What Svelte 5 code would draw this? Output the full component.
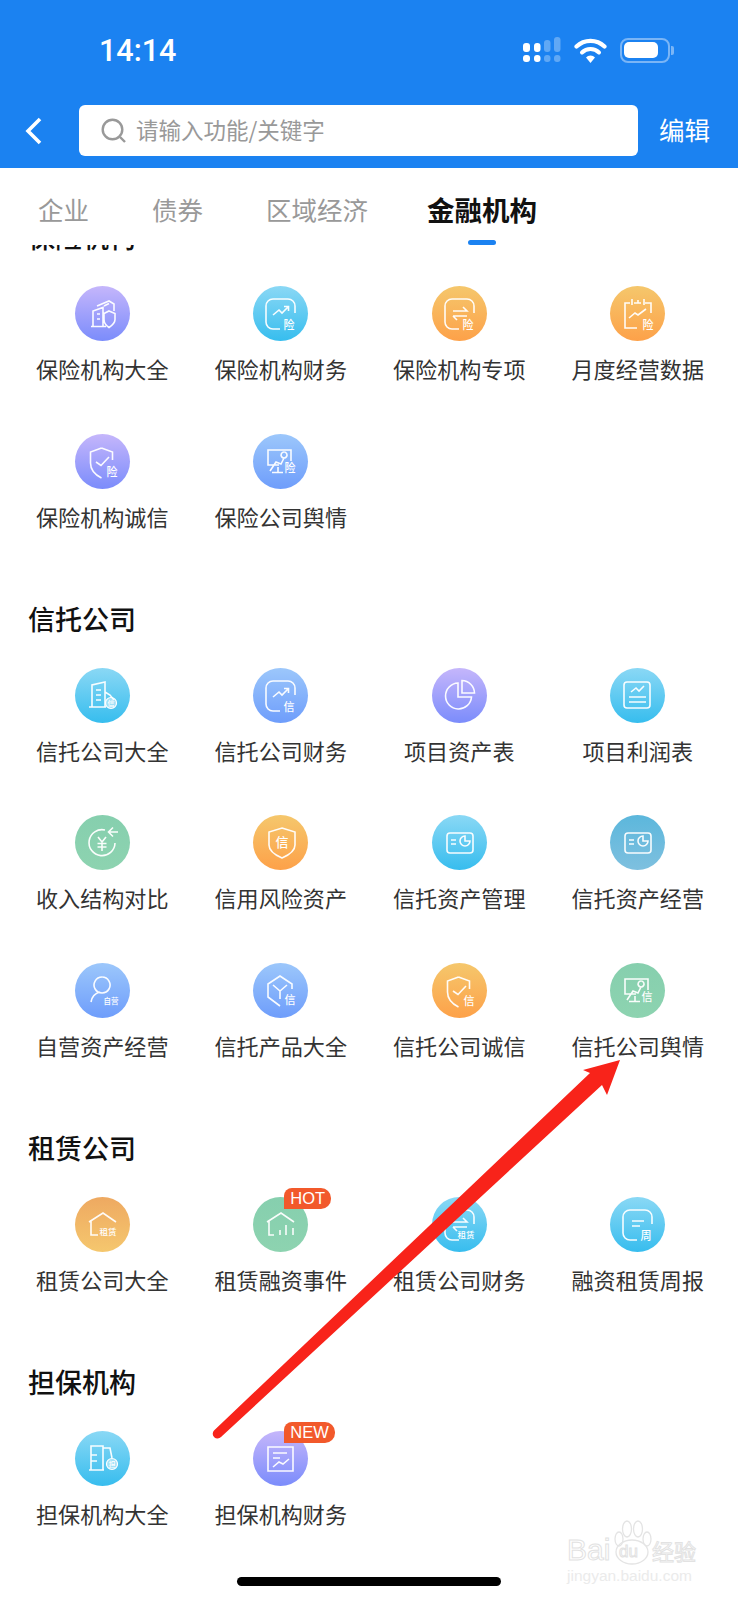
<script>
	// icon strokes live in a 55x55 box, tag is the tiny char inside the circle
	const shell = 'M27 43H20a7 7 0 0 1-7-7V20a7 7 0 0 1 7-7H35a7 7 0 0 1 7 7V27';
	const trend = 'M20 29l6-5 3 3 6-6M31 20.5h4.5V25';
	const arrows = 'M21 25H35l-4-4M21 30H35M21 30l4 4';
	const monitor = 'M26 31H15V16H38V27M17 37l6-9 5 2 3-6M19 38.5H30M25 33V38.500M31 18a3 3 0 1 0 .1 0';
	const check = 'M26.500 14l-11 4v11c0 7 5 12 11 15M26.500 14l11 4v8M21 28l5 3.500 8-8.500';

	const icons = {
		insure: { d: 'M16 40.500H31M18 40V25l10-3.500V40M22 28h3M22 33h3M22 20l12-5 5 3V25M29 20l5-2.500M34 25l6 2.500v6c0 4-3 6-6 8-3-2-5-4-5-8v-6z' },
		fin: { d: shell + trend, t: '险' },
		fin2: { d: shell + trend, t: '信' },
		swap: { d: shell + arrows, t: '险' },
		month: { d: 'M27 42H15V17H20M24 17h7M35 17h6V27M22 13v6M28 14v3M34 13v6M19 32l6-5 3 2 8-6', t: '险', tx: 38 },
		shield: { d: check, t: '险', tx: 37, ty: 42 },
		shield2: { d: check, t: '信', tx: 37, ty: 42 },
		monitor: { d: monitor, t: '险', tx: 37, ty: 38 },
		monitor2: { d: monitor, t: '信', tx: 37, ty: 38 },
		tower: {
			d: 'M14 39H31M17 39V17l13-3V39M21 22h5M21 27h5M21 32h5M30 24l5 3 4 5',
			dot: [36, 35, 5.500],
			t: '信',
			tx: 36,
			ty: 38,
			ts: 7
		},
		pie: { d: 'M26 15a13 13 0 1 0 13.500 14H26zM30 12.500a13 13 0 0 1 12.500 12.500H30z' },
		report: { d: 'M17 14H37a3 3 0 0 1 3 3V37a3 3 0 0 1-3 3H17a3 3 0 0 1-3-3V17a3 3 0 0 1 3-3zM21 24l5-4 3 3 5-5M19 29H36M19 34H36' },
		yuan: {
			d: 'M30 15a13 13 0 1 0 10 13M34 17H43M38 12.500l-4.500 4.500 4.500 4.500M23 22l4 5 4-5M27 27V36M22.500 28.500h9M22.500 32h9'
		},
		badge: { d: 'M29 13l13 4v13c0 6-6 10-13 13-7-3-13-7-13-13V17z', t: '信', tx: 29, ty: 32, ts: 13 },
		card: { d: 'M18 18H38a3 3 0 0 1 3 3V35a3 3 0 0 1-3 3H18a3 3 0 0 1-3-3V21a3 3 0 0 1 3-3zM19 25h5M19 29h5M33 21a5 5 0 1 0 5 5H33z' },
		person: { d: 'M27 14a8 8 0 1 0 .100 0M16 39c1-6 5-9 9-10', t: '自营', tx: 36, ty: 41, ts: 7.500 },
		cube: { d: 'M27 43L15 34V21L27 13 39 21V26M20 22l7 6 7-6M27 28V36', t: '信', tx: 37, ty: 41 },
		house: { d: 'M14 25L28 16 41 25M16 23V38H23', t: '租赁', tx: 33, ty: 38, ts: 8.500 },
		bars: { d: 'M14 25L28 16 41 25M16 23V38H21M27 33V38M33 28V38M40 31V38' },
		leasefin: { d: shell + arrows, t: '租赁', tx: 34, ty: 41, ts: 8.500 },
		week: { d: shell + 'M22 24H34M22 29H30', t: '周' },
		guard: {
			d: 'M14 39H29M16 39V15H28V39M16 24H22M16 30H22M28 17H35l2 10',
			dot: [37, 33, 5.500],
			t: '担',
			tx: 37,
			ty: 36,
			ts: 7
		},
		paper: { d: 'M15 16H40V40H15zM20 22H34M20 27H27M20 36l6-5 4 2 6-5' }
	};

	const sections = [
		{
			title: '保险机构',
			items: [
				{ label: '保险机构大全', icon: 'insure', tone: 'purple' },
				{ label: '保险机构财务', icon: 'fin', tone: 'cyan' },
				{ label: '保险机构专项', icon: 'swap', tone: 'orange' },
				{ label: '月度经营数据', icon: 'month', tone: 'orange' },
				{ label: '保险机构诚信', icon: 'shield', tone: 'purple' },
				{ label: '保险公司舆情', icon: 'monitor', tone: 'blue' }
			]
		},
		{
			title: '信托公司',
			items: [
				{ label: '信托公司大全', icon: 'tower', tone: 'cyan' },
				{ label: '信托公司财务', icon: 'fin2', tone: 'blue' },
				{ label: '项目资产表', icon: 'pie', tone: 'purple' },
				{ label: '项目利润表', icon: 'report', tone: 'cyan' },
				{ label: '收入结构对比', icon: 'yuan', tone: 'green' },
				{ label: '信用风险资产', icon: 'badge', tone: 'orange' },
				{ label: '信托资产管理', icon: 'card', tone: 'cyan' },
				{ label: '信托资产经营', icon: 'card', tone: 'teal' },
				{ label: '自营资产经营', icon: 'person', tone: 'blue' },
				{ label: '信托产品大全', icon: 'cube', tone: 'blue' },
				{ label: '信托公司诚信', icon: 'shield2', tone: 'orange' },
				{ label: '信托公司舆情', icon: 'monitor2', tone: 'green' }
			]
		},
		{
			title: '租赁公司',
			items: [
				{ label: '租赁公司大全', icon: 'house', tone: 'sand' },
				{ label: '租赁融资事件', icon: 'bars', tone: 'green', flag: 'HOT' },
				{ label: '租赁公司财务', icon: 'leasefin', tone: 'cyan' },
				{ label: '融资租赁周报', icon: 'week', tone: 'cyan' }
			]
		},
		{
			title: '担保机构',
			items: [
				{ label: '担保机构大全', icon: 'guard', tone: 'cyan' },
				{ label: '担保机构财务', icon: 'paper', tone: 'purple', flag: 'NEW' }
			]
		}
	];

	const tabs = ['企业', '债券', '区域经济', '金融机构'];
</script>

<div class="page">
	<header class="top">
		<div class="status">
			<span class="time">14:14</span>
			<div class="status-icons">
				<svg class="signal" width="38" height="26" viewBox="0 0 38 26">
					<g fill="#fff">
						<rect x="0" y="6" width="7" height="9" rx="3" />
						<rect x="0" y="18" width="7" height="7" rx="3" />
						<rect x="11" y="6" width="6.500" height="9" rx="3" />
						<rect x="11" y="18" width="6.500" height="7" rx="3" />
					</g>
					<g fill="#fff" opacity="0.3">
						<rect x="21" y="3" width="6.500" height="12" rx="3" />
						<rect x="21" y="18" width="6.500" height="7" rx="3" />
						<rect x="31" y="0" width="6.500" height="15" rx="3" />
						<rect x="31" y="18" width="6.500" height="7" rx="3" />
					</g>
				</svg>
				<svg class="wifi" width="33" height="25" viewBox="0 0 33 25">
					<path d="M2.500 8.500a20 20 0 0 1 28 0" fill="none" stroke="#fff" stroke-width="4.200" stroke-linecap="round" />
					<path d="M8 14.500a12 12 0 0 1 17 0" fill="none" stroke="#fff" stroke-width="4" stroke-linecap="round" />
					<path d="M12 19.500a6 6 0 0 1 9 0L16.500 25z" fill="#fff" />
				</svg>
				<div class="battery"><span class="level"></span></div>
			</div>
		</div>
		<div class="nav">
			<svg class="back" width="20" height="30" viewBox="0 0 20 30">
				<path d="M16 3L4 15l12 12" fill="none" stroke="#fff" stroke-width="3.600" />
			</svg>
			<div class="search">
				<svg width="26" height="26" viewBox="0 0 26 26">
					<circle cx="11.500" cy="11.500" r="9.800" fill="none" stroke="#999" stroke-width="2.400" />
					<path d="M19 19l5 5" stroke="#999" stroke-width="2.400" />
				</svg>
				<span class="hint">请输入功能/关键字</span>
			</div>
			<span class="edit">编辑</span>
		</div>
	</header>

	<nav class="tabs">
		{#each tabs as tab, i}
			<span class="tab" class:active={i === tabs.length - 1}>{tab}</span>
		{/each}
	</nav>

	<main class="scroll">
		{#each sections as section}
			<section class="group">
				<h2>{section.title}</h2>
				<div class="grid">
					{#each section.items as item}
						{@const ic = icons[item.icon]}
						<div class="cell">
							<div class="disc {item.tone}">
								<svg width="55" height="55" viewBox="0 0 55 55">
									{#if ic.dot}
										<circle cx={ic.dot[0]} cy={ic.dot[1]} r={ic.dot[2]} fill="#fff" fill-opacity="0.45" stroke="#fff" stroke-width="1.200" />
									{/if}
									<path d={ic.d} fill="none" stroke="#fff" stroke-width="1.600" stroke-opacity="0.95" />
									{#if ic.t}
										<text x={ic.tx ?? 36} y={ic.ty ?? 42.500} font-size={ic.ts ?? 11} font-weight="500" text-anchor="middle" fill="#fff">{ic.t}</text>
									{/if}
								</svg>
								{#if item.flag}
									<span class="flag">{item.flag}</span>
								{/if}
							</div>
							<span class="label">{item.label}</span>
						</div>
					{/each}
				</div>
			</section>
		{/each}
	</main>

	<div class="home"></div>

	<!-- screenshot annotation and watermark sit on top of the app -->
	<div class="stamp">
		<svg class="paw" width="44" height="46" viewBox="0 0 44 46">
			<g fill="none" stroke="#e4e4e4" stroke-width="1.300">
				<ellipse cx="7" cy="19" rx="4" ry="7" />
				<ellipse cx="15" cy="9" rx="4.500" ry="8" />
				<ellipse cx="26" cy="9" rx="4.500" ry="8" />
				<ellipse cx="35" cy="19" rx="4" ry="7" />
				<ellipse cx="20" cy="32" rx="16" ry="12" />
			</g>
		</svg>
		<span class="bai">Bai</span>
		<span class="du">du</span>
		<span class="jy">经验</span>
		<span class="url">jingyan.baidu.com</span>
	</div>

	<svg class="arrow" width="738" height="1600" viewBox="0 0 738 1600">
		<path d="M620 1060L607 1095 602 1085 221 1437a4.600 4.600 0 0 1-7-6.500L590 1073 583 1070z" fill="#f8231a" />
	</svg>
</div>

<style>
	:global(body) {
		margin: 0;
		background: #fff;
	}

	.page {
		position: relative;
		width: 738px;
		height: 1600px;
		overflow: hidden;
		display: flex;
		flex-direction: column;
		background: #fff;
		font-family: 'Noto Sans CJK SC', 'Liberation Sans', sans-serif;
	}

	.top {
		height: 168px;
		flex: none;
		background: #1b82f1;
		color: #fff;
	}

	.status {
		height: 100px;
		margin-bottom: 5px;
		display: flex;
		align-items: center;
		justify-content: space-between;
		padding: 0 68px 0 99px;
	}

	.time {
		font-family: Roboto, 'Liberation Sans', sans-serif;
		font-size: 30.500px;
		font-weight: 500;
	}

	.status-icons {
		display: flex;
		align-items: center;
		gap: 13px;
	}

	.battery {
		position: relative;
		width: 44px;
		height: 21px;
		border: 2px solid #7ab5f6;
		border-radius: 8px;
		display: flex;
		align-items: center;
		padding-left: 2px;
	}

	.battery::after {
		content: '';
		position: absolute;
		right: -6px;
		top: 6px;
		width: 3px;
		height: 9px;
		border-radius: 0 2px 2px 0;
		background: #7ab5f6;
	}

	.level {
		width: 34px;
		height: 16px;
		border-radius: 5px;
		background: #fff;
	}

	.nav {
		display: flex;
		align-items: center;
		height: 51px;
		padding-left: 24px;
	}

	.back {
		flex: none;
		margin-right: 35px;
	}

	.search {
		width: 559px;
		height: 51px;
		flex: none;
		box-sizing: border-box;
		padding-left: 22px;
		display: flex;
		align-items: center;
		gap: 9px;
		background: #fff;
		border-radius: 6px;
		color: #999;
		font-size: 22.500px;
	}

	.hint {
		padding-bottom: 4px;
	}

	.edit {
		margin-left: 21px;
		padding-bottom: 4px;
		font-size: 25.500px;
	}

	.tabs {
		height: 77px;
		flex: none;
		box-sizing: border-box;
		display: flex;
		align-items: center;
		gap: 63px;
		padding: 4px 0 0 38px;
		background: #fff;
		color: #999;
		font-size: 25.500px;
	}

	.tab {
		position: relative;
		line-height: 36px;
	}

	.tab.active {
		margin-left: -4px;
		color: #111;
		font-size: 27.500px;
		font-weight: 700;
	}

	.tab.active::after {
		content: '';
		position: absolute;
		left: 50%;
		bottom: -18px;
		width: 28px;
		height: 5px;
		margin-left: -14px;
		border-radius: 3px;
		background: #1b82f1;
	}

	.scroll {
		flex: 1;
		min-height: 0;
		overflow: hidden;
	}

	/* list is scrolled, the first heading is cut by the tab bar */
	.group:first-child {
		margin-top: -26px;
		padding-top: 0;
	}

	.group {
		padding-top: 19.500px;
	}

	h2 {
		margin: 0 0 31px 28px;
		height: 36px;
		font-size: 27px;
		line-height: 36px;
		font-weight: 500;
		color: #111;
	}

	.grid {
		display: grid;
		grid-template-columns: repeat(4, 178.500px);
		padding-left: 13px;
	}

	.cell {
		height: 147.500px;
		display: flex;
		flex-direction: column;
		align-items: center;
	}

	.disc {
		position: relative;
		width: 55px;
		height: 55px;
		border-radius: 50%;
	}

	.disc svg {
		display: block;
	}

	.purple { background: linear-gradient(#c5b6fb, #7b8cfb); }
	.cyan { background: linear-gradient(#8ad8f5, #37bdee); }
	.orange { background: linear-gradient(#f5c76c, #fda149); }
	.blue { background: linear-gradient(#9cc7fb, #6e9dfb); }
	.green { background: linear-gradient(#86cfae, #8dd3b0); }
	.teal { background: linear-gradient(#5cb7dc, #7ec0df); }
	.sand { background: linear-gradient(#eea961, #f5c76e); }

	.flag {
		position: absolute;
		left: 31px;
		top: -9px;
		box-sizing: border-box;
		height: 21.500px;
		padding: 0 6px;
		display: flex;
		align-items: center;
		background: #f2592b;
		border-radius: 8px 10px 10px 0;
		color: #fff;
		font-family: 'Liberation Sans', sans-serif;
		font-size: 16.500px;
	}

	.label {
		margin-top: 12px;
		font-size: 22.100px;
		line-height: 30px;
		color: #333;
		white-space: nowrap;
	}

	.home {
		position: absolute;
		left: 237px;
		bottom: 14px;
		width: 264px;
		height: 9px;
		border-radius: 5px;
		background: #000;
	}

	/* watermark pieces are placed freely inside the stamp */
	.stamp {
		position: absolute;
		left: 566px;
		top: 1520px;
		width: 140px;
		height: 66px;
		font-family: 'Liberation Sans', sans-serif;
		white-space: nowrap;
	}

	.stamp span {
		position: absolute;
		color: transparent;
		-webkit-text-stroke: 1px #e2e2e2;
	}

	.paw {
		position: absolute;
		left: 46px;
		top: 0;
	}

	.stamp .bai {
		left: 1px;
		top: 15px;
		font-size: 30px;
		line-height: 30px;
	}

	.stamp .du {
		left: 53px;
		top: 23px;
		font-size: 17px;
		line-height: 18px;
	}

	.stamp .jy {
		left: 86px;
		top: 16px;
		font-family: 'Noto Sans CJK SC', sans-serif;
		font-size: 22px;
		line-height: 28px;
	}

	.stamp .url {
		left: 1px;
		top: 47px;
		font-size: 15.500px;
		line-height: 17px;
		color: #ebebeb;
		-webkit-text-stroke: 0;
	}

	.arrow {
		position: absolute;
		left: 0;
		top: 0;
		pointer-events: none;
	}
</style>
